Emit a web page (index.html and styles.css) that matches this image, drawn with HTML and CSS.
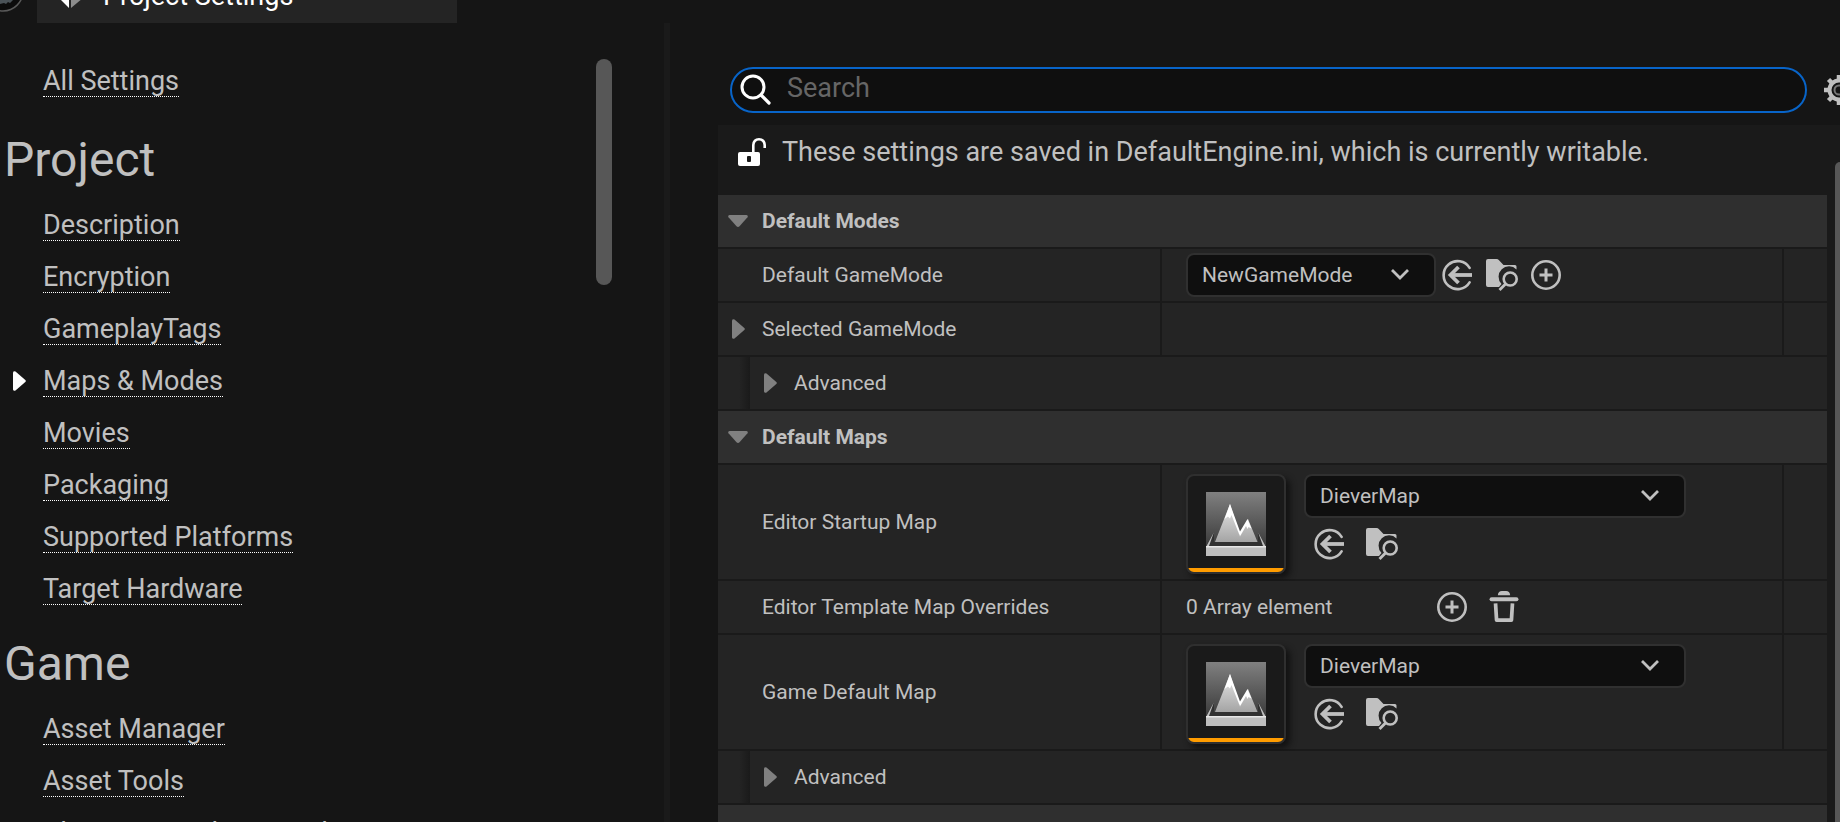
FILE: index.html
```html
<!DOCTYPE html>
<html lang="en">
<head>
<meta charset="utf-8">
<title>Project Settings</title>
<link rel="stylesheet" href="styles.css">
</head>
<body>
<svg class="sprite" aria-hidden="true">
  <symbol id="i-down" viewBox="0 0 20 12"><path d="M1.5 0h17q2 .5 1 2.300L11.500 11.300q-1.500 1.400-3 0L.5 2.300Q-.5.500 1.500 0z"/></symbol>
  <symbol id="i-right" viewBox="0 0 13 20"><path d="M0 1.500Q.5-.5 2.500.500L12.300 9q1 1 0 2L2.500 19.500Q.5 20.500 0 18.500z"/></symbol>
  <symbol id="i-chev" viewBox="0 0 20 12"><path d="M2 2l8 8 8-8" fill="none" stroke="currentColor" stroke-width="2.800"/></symbol>
  <symbol id="i-use" viewBox="0 0 32 32"><g fill="none" stroke="currentColor"><path d="M27.600 8.900A14 14 0 1 0 27.600 23.400" stroke-width="2.600" stroke-linecap="round"/><path d="M30 16H8" stroke-width="3.800"/><path d="M16.500 8L8.500 16l8 8" stroke-width="3.800"/></g></symbol>
  <symbol id="i-browse" viewBox="0 0 32 32"><path d="M2 0h8.500q1.500 0 2.500 1.200L17.500 6H29q1.500 0 1.500 1.500V10.500A9.500 9.500 0 0 0 15.500 25L13 28H2q-2 0-2-2V2Q0 0 2 0z"/><circle cx="24.200" cy="20" r="6.500" fill="none" stroke="currentColor" stroke-width="2.600"/><path d="M19.500 25l-6 6" stroke="currentColor" stroke-width="2.800"/></symbol>
  <symbol id="i-add" viewBox="0 0 32 32"><g fill="none" stroke="currentColor"><circle cx="16" cy="16" r="13.700" stroke-width="2.600"/><path d="M16 9.500v13M9.500 16h13" stroke-width="3"/></g></symbol>
  <symbol id="i-trash" viewBox="0 0 28 31"><path d="M8 4Q8.500 0 12 0h4q3.500 0 4 4z"/><rect y="6" width="28" height="4" rx="2"/><path d="M5.800 12l1 16.200h14.400l1-16.200" fill="none" stroke="currentColor" stroke-width="3.600" stroke-linejoin="round"/></symbol>
  <symbol id="i-level" viewBox="0 0 60 64">
    <defs>
      <linearGradient id="sky" x2="0" y2="1"><stop stop-color="#808080"/><stop offset="1" stop-color="#3a3a3a"/></linearGradient>
      <linearGradient id="rock" x2="0" y2="1"><stop stop-color="#e8e8e8"/><stop offset="1" stop-color="#a4a4a4"/></linearGradient>
    </defs>
    <path d="M0 0h60v55H0z" fill="url(#sky)"/>
    <path d="M0 54L8 40v10h44V40l8 14z" fill="#303030"/>
    <path d="M9 50L24 12l10 32 8-17 9.500 23z" fill="url(#rock)"/>
    <path d="M18.500 27L24 12l10 27.500L41.500 27l4 9.500-3-1.500-1 2-1.500-3L34 44.500 25.500 23l-1.500 3.500-2-2z" fill="#fff"/>
    <path d="M8 40L3 54h54l-5-14 8 15v9H0v-9z" fill="#bebebe"/>
    <path d="M0 54h60v1.500H0z" fill="#e6e6e6"/>
  </symbol>
</svg>

<header class="topbar">
  <svg class="logo" viewBox="0 0 26 26"><circle cx="3" cy="-9" r="20" fill="#0c0c0c" stroke="#5a5a5a" stroke-width="1.500"/><path d="M0 0h13l-3 3-2-1-2 2-2-1-4 1z" fill="#4a5257"/></svg>
  <div class="tab">
    <svg class="tab-icon" viewBox="0 0 26 26"><path d="M0 14l12 12V4H0z" fill="#fff"/><path d="M14 4v22l12-10V4z" fill="#8c8c8c"/></svg>
    <span>Project Settings</span>
  </div>
</header>

<div class="workspace">
  <nav class="sidebar">
    <div class="sections">
      <ul class="links all"><li><a href="#">All Settings</a></li></ul>
      <h2>Project</h2>
      <ul class="links">
        <li><a href="#">Description</a></li>
        <li><a href="#">Encryption</a></li>
        <li><a href="#">GameplayTags</a></li>
        <li class="current"><svg class="marker"><use href="#i-right"/></svg><a href="#">Maps &amp; Modes</a></li>
        <li><a href="#">Movies</a></li>
        <li><a href="#">Packaging</a></li>
        <li><a href="#">Supported Platforms</a></li>
        <li><a href="#">Target Hardware</a></li>
      </ul>
      <h2>Game</h2>
      <ul class="links">
        <li><a href="#">Asset Manager</a></li>
        <li><a href="#">Asset Tools</a></li>
        <li><a href="#">Chaos General Research</a></li>
      </ul>
    </div>
    <div class="scrollbar"></div>
  </nav>
  <div class="splitter"></div>

  <main class="content">
    <div class="searchrow">
      <label class="search">
        <svg viewBox="0 0 32 32"><circle cx="13" cy="13" r="11" fill="none" stroke="#fff" stroke-width="3"/><path d="M21 21l8 8" stroke="#fff" stroke-width="3.200" stroke-linecap="round"/></svg>
        <input type="text" placeholder="Search" aria-label="Search">
      </label>
      <button class="icon gear" aria-label="Options"><svg viewBox="0 0 30 30"><circle cx="15" cy="15" r="9.500" fill="none" stroke="currentColor" stroke-width="4"/><circle cx="15" cy="15" r="4.500" fill="none" stroke="#777" stroke-width="2"/><path d="M15 0v5M15 25v5M0 15h5M25 15h5M4.500 4.500l4 4M21.500 21.500l4 4M4.500 25.500l4-4M21.500 8.500l4-4" stroke="currentColor" stroke-width="4.500"/></svg></button>
    </div>

    <div class="details">
      <div class="panel">
        <p class="notice"><svg viewBox="0 0 28 28"><path d="M2 14h18q2 0 2 2v10q0 2-2 2H2q-2 0-2-2V16q0-2 2-2z" fill="#fff"/><path d="M15.300 14V7Q15.800 1.300 21 1.300T26.700 7v3" fill="none" stroke="#fff" stroke-width="2.600"/><rect x="9" y="18" width="4" height="6" rx="1" fill="#1a1a1a"/></svg>These settings are saved in DefaultEngine.ini, which is currently writable.</p>

        <button class="category"><svg class="down"><use href="#i-down"/></svg>Default Modes</button>
        <div class="row">
          <div class="name">Default GameMode</div>
          <div class="value">
            <div class="combo narrow"><select aria-label="Default GameMode"><option>NewGameMode</option></select><svg><use href="#i-chev"/></svg></div>
            <div class="tools">
              <button class="icon" aria-label="Use selected"><svg><use href="#i-use"/></svg></button>
              <button class="icon" aria-label="Browse"><svg><use href="#i-browse"/></svg></button>
              <button class="icon" aria-label="New"><svg><use href="#i-add"/></svg></button>
            </div>
          </div>
          <div class="reset"></div>
        </div>
        <div class="row">
          <div class="name"><svg class="right"><use href="#i-right"/></svg>Selected GameMode</div>
          <div class="value"></div>
          <div class="reset"></div>
        </div>
        <div class="advanced"><div class="indent"></div><button><svg class="right"><use href="#i-right"/></svg>Advanced</button></div>

        <button class="category"><svg class="down"><use href="#i-down"/></svg>Default Maps</button>
        <div class="row tall">
          <div class="name">Editor Startup Map</div>
          <div class="value">
            <div class="thumb"><svg><use href="#i-level"/></svg></div>
            <div class="asset">
              <div class="combo"><select aria-label="Editor Startup Map"><option>DieverMap</option></select><svg><use href="#i-chev"/></svg></div>
              <div class="tools wide">
                <button class="icon" aria-label="Use selected"><svg><use href="#i-use"/></svg></button>
                <button class="icon" aria-label="Browse"><svg><use href="#i-browse"/></svg></button>
              </div>
            </div>
          </div>
          <div class="reset"></div>
        </div>
        <div class="row">
          <div class="name">Editor Template Map Overrides</div>
          <div class="value">
            <span class="count">0 Array element</span>
            <div class="tools wide">
              <button class="icon" aria-label="Add element"><svg><use href="#i-add"/></svg></button>
              <button class="icon" aria-label="Remove all elements"><svg><use href="#i-trash"/></svg></button>
            </div>
          </div>
          <div class="reset"></div>
        </div>
        <div class="row tall">
          <div class="name">Game Default Map</div>
          <div class="value">
            <div class="thumb"><svg><use href="#i-level"/></svg></div>
            <div class="asset">
              <div class="combo"><select aria-label="Game Default Map"><option>DieverMap</option></select><svg><use href="#i-chev"/></svg></div>
              <div class="tools wide">
                <button class="icon" aria-label="Use selected"><svg><use href="#i-use"/></svg></button>
                <button class="icon" aria-label="Browse"><svg><use href="#i-browse"/></svg></button>
              </div>
            </div>
          </div>
          <div class="reset"></div>
        </div>
        <div class="advanced"><div class="indent"></div><button><svg class="right"><use href="#i-right"/></svg>Advanced</button></div>
        <div class="category"></div>
      </div>
      <div class="scrollbar"></div>
    </div>
  </main>
</div>
</body>
</html>
```

FILE: styles.css
```css
* { box-sizing: border-box; }

body {
  margin: 0;
  height: 100vh;
  overflow: hidden;
  display: flex;
  flex-direction: column;
  background: #151515;
  color: #c0c0c0;
  font-family: Roboto, "Liberation Sans", sans-serif;
  font-size: 21px;
  line-height: 26px;
}

button, input, select {
  font: inherit;
  color: inherit;
  background: none;
  border: 0;
  padding: 0;
  margin: 0;
}

svg { display: block; flex: none; fill: currentColor; }
.sprite { position: absolute; width: 0; height: 0; }

.topbar { display: flex; flex: none; height: 23px; overflow: hidden; }
.logo { width: 26px; height: 26px; margin-right: 11px; }
.tab {
  display: flex;
  align-items: flex-end;
  gap: 20px;
  width: 420px;
  height: 23px;
  padding: 0 20px 15px;
  background: #242424;
  color: #fff;
}
.tab-icon { width: 26px; height: 26px; }
.tab span { font-size: 27px; line-height: 32px; margin-bottom: -4px; }

.workspace { display: flex; flex: 1; min-height: 0; overflow: hidden; }

.sidebar {
  display: flex;
  justify-content: space-between;
  flex: none;
  width: 664px;
  padding: 36px 52px 0 4px;
  overflow: hidden;
}
.scrollbar { flex: none; background: #575757; }
.sidebar .scrollbar { width: 16px; height: 226px; border-radius: 8px; }

.links { list-style: none; margin: 0; padding: 0 0 0 39px; }
.links.all { padding-bottom: 4px; }
.links li { display: flex; align-items: flex-start; height: 52px; position: relative; }
.links a {
  color: inherit;
  text-decoration: none;
  font-size: 27px;
  line-height: 32px;
  height: 38px;
  padding-top: 6px;
  white-space: nowrap;
  border-bottom: 1px dotted #fff;
}
.marker { position: absolute; left: -30px; top: 12px; width: 13px; height: 20px; color: #fff; }
.sidebar h2 { margin: 0; font-size: 48px; line-height: 60px; font-weight: 400; padding: 15px 0 13px; }

.splitter { flex: none; width: 6px; background: #1a1a1a; }

.content { flex: 1; min-width: 0; display: flex; flex-direction: column; padding-left: 48px; overflow: hidden; }
.searchrow { display: flex; align-items: center; flex: none; padding: 44px 0 12px 12px; gap: 17px; margin-right: -14px; }
.search {
  display: flex;
  align-items: center;
  flex: 1;
  height: 46px;
  gap: 15px;
  padding-left: 8px;
  background: #0f0f0f;
  border: 2px solid #0864c8;
  border-radius: 23px;
}
.search svg { width: 32px; height: 32px; }
.search input { flex: 1; min-width: 0; height: 38px; font-size: 27px; outline: 0; padding-bottom: 5px; }
.search input::placeholder { color: #666; opacity: 1; }

.icon { display: block; flex: none; color: #c0c0c0; }
.icon svg { width: 32px; height: 32px; }
.gear svg { width: 30px; height: 30px; }

.details { display: flex; flex: 1; min-height: 0; background: #1a1a1a; }
.panel { flex: 1; min-width: 0; margin-right: 8px; }
.details > .scrollbar { width: 5px; margin-top: 37px; border-radius: 5px 0 0 0; }

.notice { display: flex; align-items: center; gap: 16px; margin: 0; height: 70px; padding: 0 0 16px 20px; font-size: 27px; line-height: 34px; white-space: nowrap; }
.notice svg { width: 28px; height: 28px; }

.category {
  display: flex;
  align-items: center;
  gap: 14px;
  width: 100%;
  height: 52px;
  padding-left: 10px;
  margin-bottom: 2px;
  background: #2f2f2f;
  font-weight: 700;
}
.down { width: 20px; height: 12px; color: #808080; }
.right { width: 13px; height: 20px; color: #808080; }

.row { display: grid; grid-template-columns: 442px 1fr 43px; gap: 2px; height: 52px; margin-bottom: 2px; }
.row.tall { height: 114px; }
.name, .value, .reset, .advanced > button, .indent { background: #242424; }
.name { display: flex; align-items: center; gap: 17px; padding-left: 44px; }
.name:has(svg) { padding-left: 14px; }
.value { display: flex; align-items: center; padding-left: 24px; }
.tall .value { align-items: flex-start; padding-top: 9px; }

.advanced { display: flex; height: 52px; margin-bottom: 2px; }
.indent { width: 32px; background: linear-gradient(90deg, #242424 66%, #1a1a1a); }
.advanced > button { flex: 1; display: flex; align-items: center; gap: 17px; padding-left: 14px; }

.combo { position: relative; width: 382px; height: 44px; }
.combo.narrow { width: 250px; }
.combo select {
  appearance: none;
  width: 100%;
  height: 100%;
  padding: 0 60px 0 14px;
  background: #0f0f0f;
  border: 2px solid #303030;
  border-radius: 8px;
}
.combo svg { position: absolute; right: 26px; top: 15px; width: 20px; height: 12px; pointer-events: none; }

.tools { display: flex; gap: 12px; margin-left: 6px; }
.tools.wide { gap: 20px; margin-left: 10px; }

.thumb {
  display: flex;
  justify-content: center;
  align-items: flex-start;
  flex: none;
  width: 100px;
  height: 100px;
  padding-top: 16px;
  margin-right: 18px;
  background: linear-gradient(#1a1a1a 92px, #ff9c00 92px);
  border: 2px solid #2f2f2f;
  border-radius: 8px;
  box-shadow: 4px 4px 6px #111;
}
.thumb svg { width: 60px; height: 64px; }
.asset { display: flex; flex-direction: column; gap: 10px; }
.count { width: 240px; }
```
